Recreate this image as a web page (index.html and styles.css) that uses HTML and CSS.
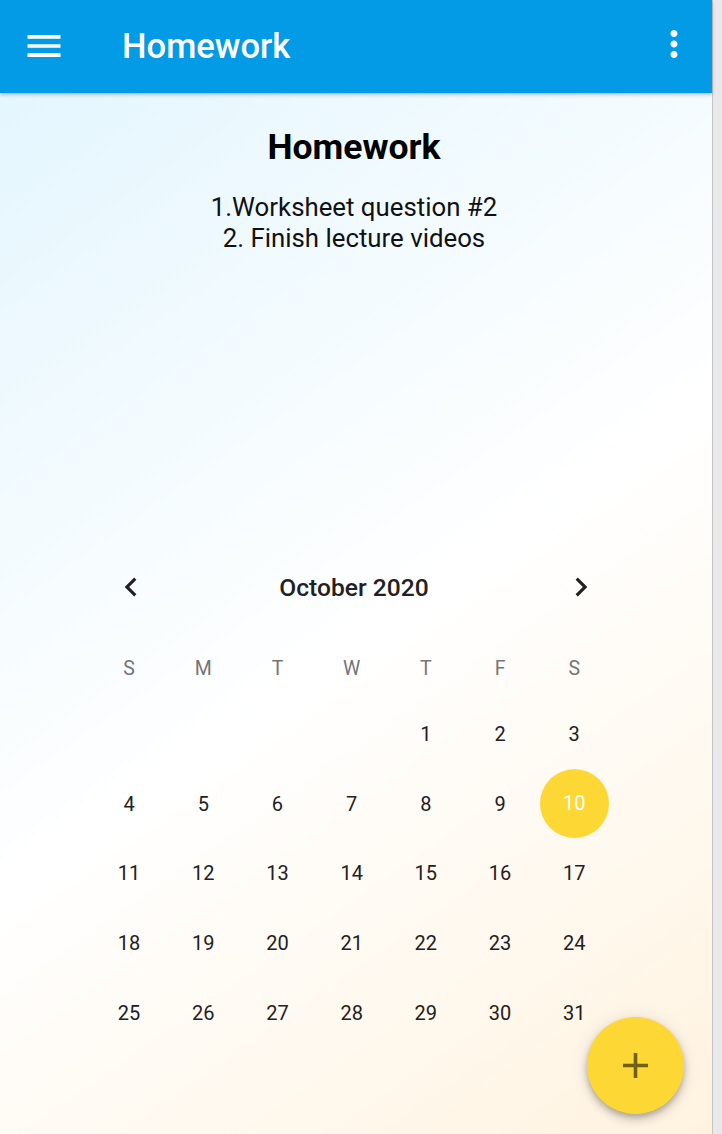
FILE: index.html
```html
<!DOCTYPE html>
<html>
<head>
<meta charset="utf-8">
<link rel="stylesheet" href="styles.css">
</head>
<body>
<div class="screen">
  <div class="main">
    <header class="appbar">
      <svg class="menu" viewBox="0 0 24 24"><path d="M3 18h18v-2H3v2zm0-5h18v-2H3v2zm0-7v2h18V6H3z"/></svg>
      <div class="appbar-title">Homework</div>
      <svg class="more" viewBox="0 0 24 24"><path d="M12 8c1.1 0 2-.9 2-2s-.9-2-2-2-2 .9-2 2 .9 2 2 2zm0 2c-1.1 0-2 .9-2 2s.9 2 2 2 2-.9 2-2-.9-2-2-2zm0 6c-1.1 0-2 .9-2 2s.9 2 2 2 2-.9 2-2-.9-2-2-2z"/></svg>
    </header>
    <section class="content">
      <h1 class="title">Homework</h1>
      <div class="notes">
        <div>1.Worksheet question #2</div>
        <div>2. Finish lecture videos</div>
      </div>
      <div class="calendar">
        <div class="cal-head">
          <svg class="chev" viewBox="0 0 24 24"><path d="M15.41 7.41L14 6l-6 6 6 6 1.41-1.41L10.83 12z"/></svg>
          <div class="month">October 2020</div>
          <svg class="chev chev-right" viewBox="0 0 24 24"><path d="M10 6L8.59 7.41 13.17 12l-4.58 4.59L10 18l6-6z"/></svg>
        </div>
        <div class="weekdays">
          <span>S</span><span>M</span><span>T</span><span>W</span><span>T</span><span>F</span><span>S</span>
        </div>
        <div class="days">
          <span></span><span></span><span></span><span></span>
          <span>1</span><span>2</span><span>3</span>
          <span>4</span><span>5</span><span>6</span><span>7</span><span>8</span><span>9</span><span class="selected">10</span>
          <span>11</span><span>12</span><span>13</span><span>14</span><span>15</span><span>16</span><span>17</span>
          <span>18</span><span>19</span><span>20</span><span>21</span><span>22</span><span>23</span><span>24</span>
          <span>25</span><span>26</span><span>27</span><span>28</span><span>29</span><span>30</span><span>31</span>
        </div>
      </div>
      <button class="fab" aria-label="Add">
        <svg viewBox="0 0 24 24"><path d="M19 13h-6v6h-2v-6H5v-2h6V5h2v6h6v2z"/></svg>
      </button>
    </section>
  </div>
  <div class="gutter"></div>
</div>
</body>
</html>
```

FILE: styles.css
```css
* { box-sizing: border-box; }
html, body {
  margin: 0;
  padding: 0;
  height: 100%;
}
body {
  font-family: Roboto, "Noto Sans", "Liberation Sans", sans-serif;
  color: #212121;
}
.screen {
  display: flex;
  width: 722px;
  height: 1134px;
  overflow: hidden;
}
.main {
  width: 712px;
  height: 1134px;
  display: flex;
  flex-direction: column;
  background: linear-gradient(145deg, #e1f5fe 0%, #ffffff 55%, #fff3e0 100%);
}
.gutter {
  width: 10px;
  height: 1134px;
  background: #e9e9eb;
  border-left: 1px solid #c6c6c8;
}
.appbar {
  height: 93px;
  background: #039be5;
  display: flex;
  align-items: center;
  color: #fff;
  box-shadow: 0 2px 4px rgba(0,0,0,0.18), 0 1px 2px rgba(0,0,0,0.12);
  position: relative;
  z-index: 1;
  flex-shrink: 0;
}
.menu {
  width: 44px;
  height: 44px;
  fill: #fff;
  margin-left: 22px;
  margin-top: -2px;
}
.appbar-title {
  font-size: 34.6px;
  font-weight: 500;
  margin-left: 56px;
  flex: 1;
  margin-top: -2px;
}
.more {
  width: 42px;
  height: 42px;
  fill: #fff;
  margin-right: 17px;
  margin-top: -5px;
}
.content {
  position: relative;
  flex: 1;
  display: flex;
  flex-direction: column;
  align-items: stretch;
  padding-right: 4px;
}
.title {
  margin: 32px 0 0;
  font-size: 35.5px;
  font-weight: 700;
  line-height: 44px;
  text-align: center;
  color: #000;
}
.notes {
  margin-top: 23px;
  font-size: 25.8px;
  line-height: 31px;
  text-align: center;
  color: #111;
}
.calendar {
  margin-top: 309px;
  margin-left: 92px;
  width: 520px;
}
.cal-head {
  height: 48px;
  display: flex;
  align-items: center;
  justify-content: space-between;
}
.chev {
  width: 38px;
  height: 38px;
  fill: #212121;
  margin-left: 20px;
}
.chev-right {
  margin-left: 0;
  margin-right: 12px;
}
.month {
  font-size: 24.6px;
  font-weight: 500;
  color: #212121;
  margin-right: 4px;
}
.weekdays {
  margin-top: 37px;
  height: 40px;
  display: grid;
  grid-template-columns: repeat(7, 74.2px);
  align-items: center;
  font-size: 19.5px;
  color: #757575;
}
.weekdays span, .days span {
  text-align: center;
}
.days {
  margin-top: 11px;
  display: grid;
  grid-template-columns: repeat(7, 74.2px);
  grid-auto-rows: 69.7px;
  font-size: 20px;
  color: #212121;
}
.days span {
  display: flex;
  align-items: center;
  justify-content: center;
}
.days .selected {
  width: 69px;
  height: 69px;
  margin: 0 auto;
  border-radius: 50%;
  background: #fdd835;
  color: #fff;
}
.fab {
  position: absolute;
  right: 28px;
  bottom: 20px;
  width: 97px;
  height: 97px;
  border-radius: 50%;
  border: none;
  padding: 0;
  background: #fdd835;
  display: flex;
  align-items: center;
  justify-content: center;
  box-shadow: 0 6px 10px rgba(0,0,0,0.14), 0 1px 18px rgba(0,0,0,0.10), 0 3px 5px rgba(0,0,0,0.16);
}
.fab svg {
  width: 43px;
  height: 43px;
  fill: rgba(0,0,0,0.56);
}
```
